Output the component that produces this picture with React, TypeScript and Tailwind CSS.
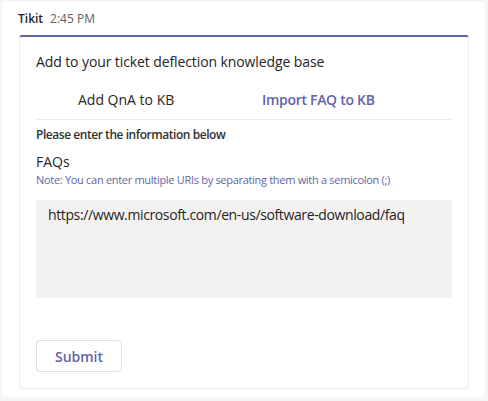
import React from 'react';

const font = { fontFamily: '"Open Sans", "Noto Sans", sans-serif' };

const App: React.FC = () => {
  return (
    <div className="w-[488px] h-[401px] bg-[#f5f5f5] p-[2px] pr-[3px] pb-[4px] text-[#252423]" style={font}>
      <div className="h-full bg-white rounded-[4px] pt-[7px] pl-[16px] pr-[16px]">
        <div className="flex items-baseline gap-[7px] h-[20px] text-[12px] leading-[20px]">
          <span className="font-semibold text-[#252423]">Tikit</span>
          <span className="text-[#616161]">2:45 PM</span>
        </div>
        <div className="mt-[6px] ml-[1px] w-[450px] h-[354px] border border-[#ebebeb] border-t-2 border-t-[#6264a7] rounded-[3px] pt-[15px] pl-[16px] pr-[16px]">
          <p className="text-[14px] leading-[20px] tracking-[-0.1px]">Add to your ticket deflection knowledge base</p>
          <div className="mt-[8px] flex h-[40px] items-center border-b border-[#edebe9] text-[14px]">
            <span className="w-[226px] pl-[42px]">Add QnA to KB</span>
            <span className="font-semibold text-[#6264a7] tracking-[-0.3px]">Import FAQ to KB</span>
          </div>
          <p className="mt-[6px] text-[12px] leading-[18px] font-semibold text-[#323130] tracking-[-0.45px]">Please enter the information below</p>
          <p className="mt-[8px] text-[14px] leading-[20px]">FAQs</p>
          <p className="text-[11px] leading-[16px] text-[#6264a7] tracking-[-0.3px]">Note: You can enter multiple URIs by separating them with a semicolon (;)</p>
          <div className="mt-[12px] h-[98px] bg-[#f3f2f1] rounded-[2px] px-[12px] pt-[5px] text-[14px] leading-[20px] tracking-[-0.38px]">
            https://www.microsoft.com/en-us/software-download/faq
          </div>
          <button className="mt-[42px] w-[86px] h-[32px] border border-[#e1dfdd] rounded-[4px] bg-white text-[14px] font-semibold text-[#6264a7]" style={font}>
            Submit
          </button>
        </div>
      </div>
    </div>
  );
};

export default App;
